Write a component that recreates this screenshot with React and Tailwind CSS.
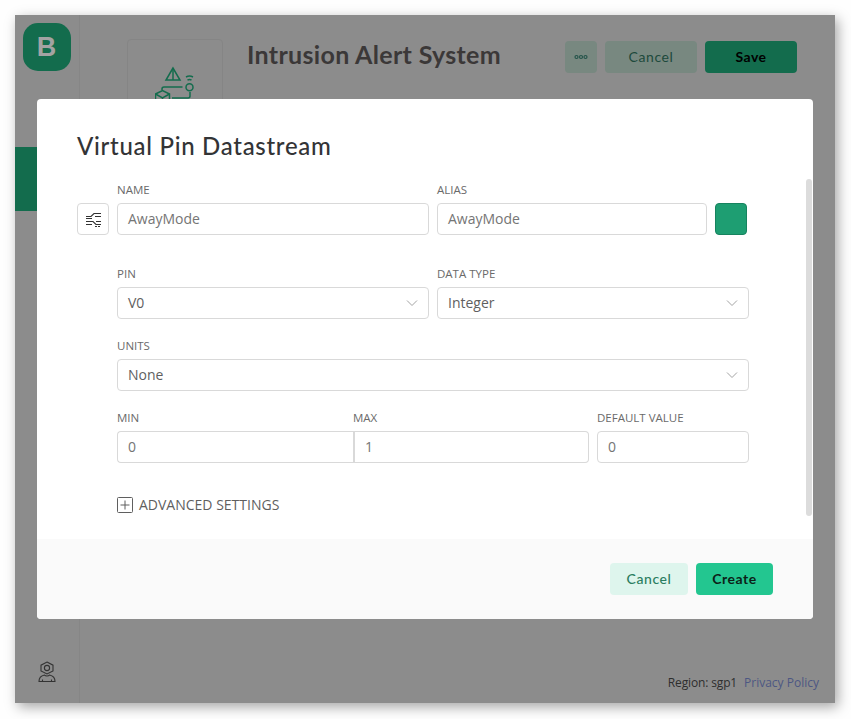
const chevron = (
  <svg width="12" height="12" viewBox="0 0 12 12" fill="none" stroke="#a3a3a3" strokeWidth="1">
    <path d="M1 3.500 6 8.500 11 3.500" />
  </svg>
)

function Field({ label, children, className = "" }) {
  return (
    <div className={`flex flex-col ${className}`}>
      <label className="h-[19px] text-[11.5px] leading-[12px] uppercase text-[#6a6a6a]">{label}</label>
      {children}
    </div>
  )
}

function TextBox({ value, className = "rounded" }) {
  return (
    <div className={`h-8 flex items-center px-[10px] pb-[2px] border border-[#d9d9d9] bg-white text-[14px] text-[#757575] ${className}`}>
      {value}
    </div>
  )
}

function SelectBox({ value }) {
  return (
    <div className="h-8 flex items-center justify-between pl-[10px] pr-[10px] border border-[#d9d9d9] rounded bg-white text-[14px] text-[#5f5f5f]">
      <span className="pb-[2px]">{value}</span>
      {chevron}
    </div>
  )
}

function Backdrop() {
  return (
    <div className="flex h-full">
      <div className="w-[65px] border-r border-[#868686] flex flex-col items-center">
        <div className="mt-2 mr-[1px] w-12 h-12 rounded-[15px] bg-[#136c4d] flex items-center justify-center text-[#a3a3a3] text-[27px] font-bold font-['Liberation_Sans',sans-serif]">B</div>
        <div className="mt-[76px] w-full h-16 bg-[#136c4d]"></div>
        <div className="mt-auto mb-[20px]">
          <svg width="18" height="22" viewBox="0 0 18 22" fill="none" stroke="#333" strokeWidth="1.1">
            <path d="M9 1 15 4.200V10L9 13 3 10V4.200Z" />
            <circle cx="9" cy="7" r="2.600" />
            <path d="M1 20.500C1 16.500 4 14.500 6.500 14 7.500 15.300 10.500 15.300 11.500 14 14 14.500 17 16.500 17 20.500Z" />
            <path d="M4.500 20.500V18.500M13.500 20.500V18.500" />
          </svg>
        </div>
      </div>
      <div className="flex-1 flex flex-col pr-[38px]">
        <div className="flex pt-6 pl-[47px]">
          <div className="w-[96px] h-[96px] border border-[#858585] rounded flex items-start justify-center">
            <svg className="mt-[26px] ml-[3px]" width="44" height="40" viewBox="0 0 44 40" fill="none" stroke="#136c4d" strokeWidth="1.5">
              <path d="M18 2 11 14H25Z" />
              <path d="M18 2V14" />
              <path d="M7 24V23Q7 21 9 21H27.500" />
              <circle cx="34.500" cy="21.300" r="3.500" />
              <path d="M31 11Q34.500 9 38 11M32.500 14Q34.500 13 36.500 14" />
              <path d="M0.500 28 7.500 24.500 14.500 28V36L7.500 40 0.500 36Z" />
              <path d="M0.500 28 7.500 32 14.500 28M7.500 32V40" />
              <path d="M17 32H33Q35 32 35 30V26" />
            </svg>
          </div>
          <h1 className="ml-6 mt-[-1px] h-9 text-[25px] leading-[32px] font-bold tracking-[0.32px] text-[#3b3838] font-['Lato',sans-serif]">Intrusion Alert System</h1>
          <div className="ml-auto mt-[2px] flex gap-2">
            <div className="w-8 h-8 rounded bg-[#788880] flex items-center justify-center">
              <svg width="14" height="6" viewBox="0 0 14 6" fill="none" stroke="#24544a" strokeWidth="1.200">
                <circle cx="2.500" cy="3" r="1.500" /><circle cx="7" cy="3" r="1.500" /><circle cx="11.500" cy="3" r="1.500" />
              </svg>
            </div>
            <div className="w-[92px] h-8 pb-[2px] rounded bg-[#788880] flex items-center justify-center text-[14px] tracking-[0.6px] text-[#1d4a3c] font-['Lato',sans-serif]">Cancel</div>
            <div className="w-[92px] h-8 pb-[2px] rounded bg-[#136c4d] flex items-center justify-center text-[14px] tracking-[0.5px] font-bold text-black font-['Lato',sans-serif]">Save</div>
          </div>
        </div>
        <div className="mt-auto mb-[11px] flex justify-end gap-[7px] mr-[-22px] text-[12px]">
          <span className="tracking-[-0.15px] text-[#2e2e2e]">Region: sgp1</span>
          <span className="text-[#4d5783]">Privacy Policy</span>
        </div>
      </div>
    </div>
  )
}

function Modal() {
  return (
    <div className="relative w-[776px] h-[520px] rounded bg-white flex flex-col overflow-hidden">
      <div className="flex-1 px-10 pt-[29px]">
        <h2 className="h-9 text-[24px] leading-9 font-medium tracking-[0.7px] text-[#333436] font-['Lato',sans-serif]">Virtual Pin Datastream</h2>
        <div className="mt-[20px] flex gap-2 items-end">
          <div className="w-8 h-8 border border-[#d9d9d9] rounded flex items-center justify-center">
            <svg width="15" height="15" viewBox="0 0 15 15" fill="none" stroke="#333" strokeWidth="1.100">
              <path d="M0 4.500H5L8 1.500H15" />
              <path d="M9 4.500H15" />
              <path d="M0 6.500H6" />
              <path d="M0 9.500H7L10 12.500H15" />
              <path d="M10 9.500H15" />
              <path d="M0 12.500H6" />
              <path d="M9 14.500H15" strokeDasharray="2 1" />
            </svg>
          </div>
          <div className="w-[632px] grid grid-cols-[312px_270px_32px] gap-x-2">
            <Field label="Name"><TextBox value="AwayMode" /></Field>
            <Field label="Alias"><TextBox value="AwayMode" /></Field>
            <div className="self-end h-8 rounded border border-[#17835f] bg-[#1e9e72]"></div>
          </div>
        </div>
        <div className="ml-10 mt-[33px] w-[632px] flex flex-col gap-[21px]">
          <div className="grid grid-cols-[312px_312px] gap-x-2">
            <Field label="Pin"><SelectBox value="V0" /></Field>
            <Field label="Data type"><SelectBox value="Integer" /></Field>
          </div>
          <Field label="Units"><SelectBox value="None" /></Field>
          <div className="grid grid-cols-[236px_236px_160px] gap-x-0">
            <Field label="Min"><TextBox value="0" className="rounded-l border-r-0" /></Field>
            <Field label="Max"><TextBox value="1" className="rounded-r border-l-2" /></Field>
            <Field label="Default value" className="ml-2"><TextBox value="0" /></Field>
          </div>
          <div className="mt-[10px] flex items-center gap-[6px] text-[14px] text-[#5f5f5f]">
            <svg width="16" height="16" viewBox="0 0 16 16" fill="none" stroke="#5f5f5f" strokeWidth="1">
              <rect x="0.500" y="0.500" width="15" height="15" rx="1" />
              <path d="M8 3.500V12.500M3.500 8H12.500" />
            </svg>
            ADVANCED SETTINGS
          </div>
        </div>
      </div>
      <div className="h-20 bg-[#fafafa] flex items-center justify-end gap-2 pr-10">
        <div className="w-[78px] h-8 pb-[2px] rounded bg-[#def5ed] flex items-center justify-center text-[14px] font-medium tracking-[0.6px] text-[#2a7d60] font-['Lato',sans-serif]">Cancel</div>
        <div className="w-[77px] h-8 pb-[2px] rounded bg-[#23c690] flex items-center justify-center text-[14px] font-bold tracking-[0.5px] text-[#0c1f18] font-['Lato',sans-serif]">Create</div>
      </div>
      {/* scrollbar thumb over the body */}
      <div className="absolute right-[1px] top-[80px] w-[6px] h-[337px] rounded bg-[#dcdcdc]"></div>
    </div>
  )
}

export default function App() {
  return (
    <div className="h-[719px] bg-[#fefefe] pl-[15px] pt-[15px] font-['Open_Sans',sans-serif]">
      <div className="relative w-[820px] h-[688px] bg-[#8c8c8c] shadow-[3px_4px_12px_rgba(0,0,0,0.35)]">
        <Backdrop />
        <div className="absolute inset-0 flex items-center justify-center">
          <Modal />
        </div>
      </div>
    </div>
  )
}
